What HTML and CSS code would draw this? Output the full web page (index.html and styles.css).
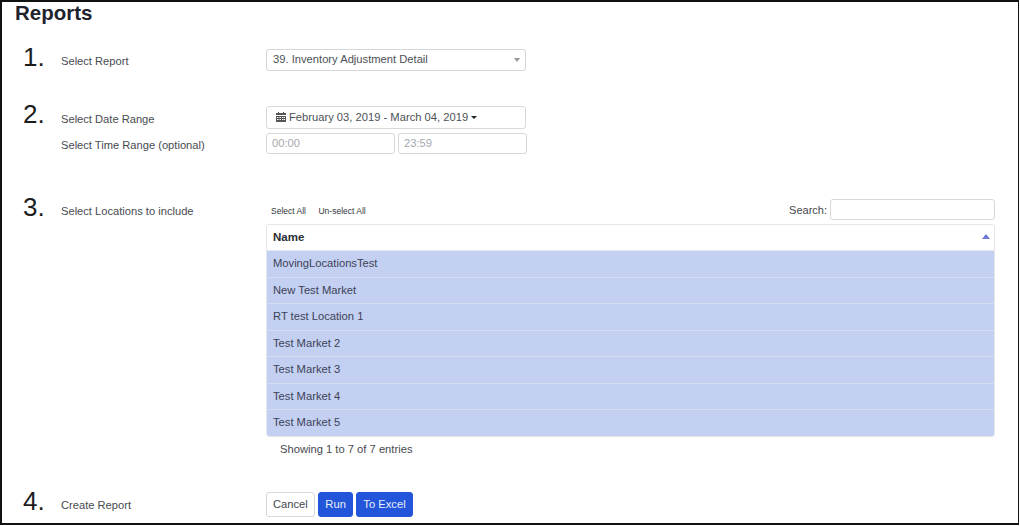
FILE: index.html
```html
<!DOCTYPE html>
<html lang="en">
<head>
<meta charset="utf-8">
<title>Reports</title>
<link rel="stylesheet" href="styles.css">
</head>
<body>
<main class="frame">
  <h1 class="title">Reports</h1>

  <section class="step step-1">
    <div class="num">1.</div>
    <div class="labels"><div class="label">Select Report</div></div>
    <div class="controls narrow">
      <div class="select">
        <span>39. Inventory Adjustment Detail</span>
        <span class="select-arrow"></span>
      </div>
    </div>
  </section>

  <section class="step step-2">
    <div class="num">2.</div>
    <div class="labels">
      <div class="label">Select Date Range</div>
      <div class="label label-time">Select Time Range (optional)</div>
    </div>
    <div class="controls narrow">
      <div class="daterange">
        <svg class="cal" viewBox="0 0 10 10" width="10" height="10" aria-hidden="true">
          <path fill="#555" fill-rule="evenodd" d="M0 1h2V0h1v1h4V0h1v1h2v2H0zM0 4h10v6H0zM1 5v1h1.5V5zM3.5 5v1H5V5zM6 5v1h1.5V5zM8 5v1h1V5zM1 7v1h1.5V7zM3.5 7v1H5V7zM6 7v1h1.5V7zM8 7v1h1V7z"/>
        </svg>
        <span>February 03, 2019 - March 04, 2019</span>
        <span class="caret"></span>
      </div>
      <div class="times">
        <input class="time" type="text" placeholder="00:00">
        <input class="time" type="text" placeholder="23:59">
      </div>
    </div>
  </section>

  <section class="step step-3">
    <div class="num">3.</div>
    <div class="labels"><div class="label">Select Locations to include</div></div>
    <div class="controls">
      <div class="toolbar">
        <div class="links"><span>Select All</span><span>Un-select All</span></div>
        <label class="search">Search:<input class="search-input" type="text"></label>
      </div>
      <div class="table">
        <div class="thead"><span>Name</span><span class="sort"></span></div>
        <div class="row">MovingLocationsTest</div>
        <div class="row">New Test Market</div>
        <div class="row">RT test Location 1</div>
        <div class="row">Test Market 2</div>
        <div class="row">Test Market 3</div>
        <div class="row">Test Market 4</div>
        <div class="row">Test Market 5</div>
      </div>
      <div class="info">Showing 1 to 7 of 7 entries</div>
    </div>
  </section>

  <section class="step step-4">
    <div class="num">4.</div>
    <div class="labels"><div class="label">Create Report</div></div>
    <div class="controls buttons">
      <button class="btn" type="button">Cancel</button>
      <button class="btn btn-primary" type="button">Run</button>
      <button class="btn btn-primary" type="button">To Excel</button>
    </div>
  </section>
</main>
</body>
</html>
```
FILE: styles.css
```css
* { box-sizing: border-box; }
html, body { margin: 0; padding: 0; background: #fff; }
body {
  font-family: "Liberation Sans", Arial, sans-serif;
  font-size: 11px;
  color: #3f4448;
  width: 1020px;
  height: 526px;
  overflow: hidden;
}
.frame {
  width: 1019px;
  height: 525px;
  border: 2px solid #111;
  border-width: 2px 1px 2px 2px;
  padding: 0 23px 0 21px;
  overflow: hidden;
}
.title {
  margin: -1px 0 0 -8px;
  font-size: 20.5px;
  line-height: 23px;
  font-weight: 700;
  color: #20232e;
}
.step {
  display: grid;
  grid-template-columns: 38px 205px 729px;
}
.step-1 { margin-top: 25px; height: 57px; }
.step-2 { height: 92px; }
.step-3 { height: 294px; }
.num {
  font-size: 26px;
  line-height: 30px;
  color: #1d1d1d;
  margin-top: -6px;
}
.step-1 .num, .step-2 .num { margin-top: -7px; }
.label { font-size: 11.15px; line-height: 14px; color: #474c50; }
.step-1 .label { padding-top: 5px; }
.step-2 .label:first-child { padding-top: 6px; }
.step-2 .label-time { padding-top: 12px; }
.step-3 .label { padding-top: 6px; }
.step-4 .label { padding-top: 6px; }
.controls { min-width: 0; }
.narrow { width: 261px; }
.select, .daterange {
  display: flex;
  align-items: center;
  border: 1px solid #d5d7d9;
  border-radius: 3px;
  background: #fff;
  font-size: 11.2px;
  color: #4c5156;
}
.select {
  height: 22px;
  padding: 0 5px 2px 6px;
  justify-content: space-between;
  width: 260px;
}
.select-arrow {
  width: 0; height: 0;
  border-left: 3.5px solid transparent;
  border-right: 3.5px solid transparent;
  border-top: 4px solid #999;
  margin: 2px 0 0;
}
.daterange {
  height: 23px;
  width: 260px;
  padding: 0 0 1px 9px;
}
.cal { margin-right: 3px; flex: none; }
.caret {
  width: 0; height: 0;
  border-left: 3.5px solid transparent;
  border-right: 3.5px solid transparent;
  border-top: 3.5px solid #222;
  margin-left: 3px;
}
.times { display: flex; gap: 3px; margin-top: 4px; }
.time {
  width: 129px;
  height: 21px;
  border: 1px solid #d5d7d9;
  border-radius: 3px;
  padding: 0 5px 2px;
  font: 11.2px "Liberation Sans", Arial, sans-serif;
  background: #fff;
  margin: 0;
}
.time::placeholder { color: #a6a9ac; opacity: 1; }
.toolbar {
  display: flex;
  justify-content: space-between;
  align-items: flex-end;
  height: 25px;
  margin-top: 1px;
}
.links {
  display: flex;
  gap: 12.5px;
  font-size: 8.5px;
  color: #33373b;
  padding: 0 0 8px 5px;
}
.search { display: flex; align-items: center; gap: 3px; font-size: 11px; color: #45494d; padding-bottom: 4px; }
.search-input {
  width: 165px;
  height: 21px;
  border: 1px solid #d5d7d9;
  border-radius: 3px;
  background: #fff;
  margin: 0;
  padding: 0;
}
.table {
  border: 1px solid #e4e6e8;
  border-radius: 3px;
  overflow: hidden;
}
.thead {
  display: flex;
  justify-content: space-between;
  align-items: center;
  height: 26px;
  padding: 0 4px 2px 6px;
  font-size: 11.5px;
  font-weight: 700;
  color: #2a2d33;
  background: #fff;
  border-bottom: 1px solid #e4e6e8;
}
.sort {
  width: 0; height: 0;
  border-left: 4px solid transparent;
  border-right: 4px solid transparent;
  border-bottom: 5px solid #6c78d8;
}
.row {
  height: 26.5px;
  line-height: 25.8px;
  padding-left: 6px;
  font-size: 11.2px;
  color: #3d4258;
  background: #c3d0f1;
  border-bottom: 1px solid #d4ddf4;
}
.row:last-child { border-bottom: 0; height: 26px; }
.info {
  padding: 5px 0 0 14px;
  font-size: 11.2px;
  line-height: 14px;
  color: #45494d;
}
.step-4 { height: 28px; }
.buttons { display: flex; gap: 3.5px; align-items: flex-start; }
.btn {
  height: 25px;
  padding: 0 6px 1px;
  border: 1px solid #d5d7d9;
  border-radius: 3px;
  background: #fff;
  font: 11.2px "Liberation Sans", Arial, sans-serif;
  color: #45494d;
  margin: 0;
}
.btn-primary {
  background: #2255d9;
  border-color: #2255d9;
  color: #e9eefb;
}
```
